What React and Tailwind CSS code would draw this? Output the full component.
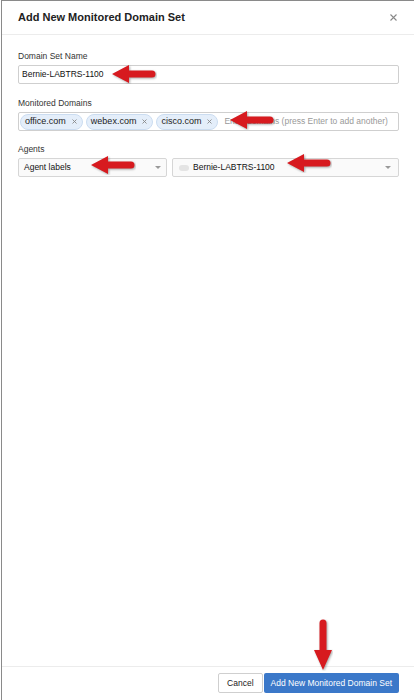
import React from 'react';

const font = { fontFamily: '"Liberation Sans", Arial, sans-serif' };

// red annotation arrow pointing left
const LeftArrow = ({ className }) => (
    <svg className={className} width="46" height="20" viewBox="0 0 46 20">
        <path
            d="M1 10 L18 1 L18 6.5 L41 6.5 A3.5 3.5 0 0 1 41 13.5 L18 13.5 L18 19 Z"
            fill="#d71a1f"
            style={{ filter: 'drop-shadow(1px 1px 0.8px rgba(0,0,0,0.35))' }}
        />
    </svg>
);

const DownArrow = ({ className }) => (
    <svg className={className} width="20" height="52" viewBox="0 0 20 52">
        <path
            d="M10 51 L1 31 L6.5 31 L6.5 4 A3.5 3.5 0 0 1 13.5 4 L13.5 31 L19 31 Z"
            fill="#d71a1f"
            style={{ filter: 'drop-shadow(1px 1px 0.8px rgba(0,0,0,0.35))' }}
        />
    </svg>
);

const Chip = ({ label }) => (
    <span className="flex items-center gap-[6px] h-[16px] pl-[4px] pr-[5px] rounded-full bg-[#e4eefa] border border-[#cbdcf0] text-[9px] text-[#222]">
        {label}
        <svg width="5" height="5" viewBox="0 0 5 5">
            <path d="M0.5 0.5 L4.5 4.5 M4.5 0.5 L0.5 4.5" stroke="#888" strokeWidth="0.9" />
        </svg>
    </span>
);

const Caret = () => (
    <svg width="6" height="3" viewBox="0 0 6 3" className="shrink-0">
        <path d="M0 0 L6 0 L3 3 Z" fill="#999" />
    </svg>
);

const App = () => {
    return (
        <div className="relative w-[414px] h-[700px] bg-white overflow-hidden" style={font}>
            <div className="ml-[1px] h-full flex flex-col border-l border-t border-[#8a8a8a]">
                {/* header */}
                <div className="h-[34px] shrink-0 flex items-center justify-between pl-[16px] pr-[17px] border-b border-[#ececec]">
                    <h2 className="text-[11px] font-bold text-[#222]">Add New Monitored Domain Set</h2>
                    <svg width="7" height="7" viewBox="0 0 7 7">
                        <path d="M0.5 0.5 L6.5 6.5 M6.5 0.5 L0.5 6.5" stroke="#888" strokeWidth="1.1" />
                    </svg>
                </div>

                {/* body */}
                <div className="flex-1 pl-[16px] pt-[15px]">
                    <div className="text-[8.5px] text-[#333] leading-[12px]">Domain Set Name</div>
                    <div className="mt-[3px] h-[19px] w-[381px] border border-[#cfcfcf] rounded-[2px] flex items-center px-[3px] text-[8.5px] text-[#111]">
                        Bernie-LABTRS-1100
                    </div>

                    <div className="mt-[13px] text-[8.5px] text-[#333] leading-[12px]">Monitored Domains</div>
                    <div className="mt-[3px] h-[19px] w-[381px] border border-[#cfcfcf] rounded-[2px] flex items-center gap-[3px] px-[1px] overflow-hidden">
                        <Chip label="office.com" />
                        <Chip label="webex.com" />
                        <Chip label="cisco.com" />
                        <span className="ml-[3px] text-[8.5px] text-[#999] whitespace-nowrap">Enter domains (press Enter to add another)</span>
                    </div>

                    <div className="mt-[12px] text-[8.5px] text-[#333] leading-[12px]">Agents</div>
                    <div className="mt-[3px] flex gap-[5px] w-[381px]">
                        <div className="w-[149px] h-[19px] border border-[#d6d6d6] rounded-[2px] bg-[#fafafa] flex items-center justify-between pl-[5px] pr-[5px] text-[8.5px] text-[#111]">
                            Agent labels
                            <Caret />
                        </div>
                        <div className="flex-1 h-[19px] border border-[#d6d6d6] rounded-[2px] bg-[#fafafa] flex items-center justify-between pl-[6px] pr-[7px] text-[8.5px] text-[#111]">
                            <span className="flex items-center gap-[4px]">
                                <span className="w-[10px] h-[6px] rounded-full bg-[#e4e4e4]" />
                                Bernie-LABTRS-1100
                            </span>
                            <Caret />
                        </div>
                    </div>
                </div>

                {/* footer */}
                <div className="h-[34px] shrink-0 border-t border-[#ececec] flex items-start justify-end gap-[1px] pt-[6px] pr-[15px]">
                    <button className="h-[20px] px-[8px] border border-[#cfcfcf] rounded-[2px] bg-white text-[8.5px] text-[#222]">
                        Cancel
                    </button>
                    <button className="h-[20px] px-[7px] rounded-[2px] bg-[#3b78c9] text-[8.5px] text-white">
                        Add New Monitored Domain Set
                    </button>
                </div>
            </div>

            {/* annotation arrows */}
            <LeftArrow className="absolute left-[111px] top-[64px]" />
            <LeftArrow className="absolute left-[229px] top-[110px]" />
            <LeftArrow className="absolute left-[90px] top-[155px]" />
            <LeftArrow className="absolute left-[286px] top-[153px]" />
            <DownArrow className="absolute left-[313px] top-[619px]" />
        </div>
    );
};

export default App;
